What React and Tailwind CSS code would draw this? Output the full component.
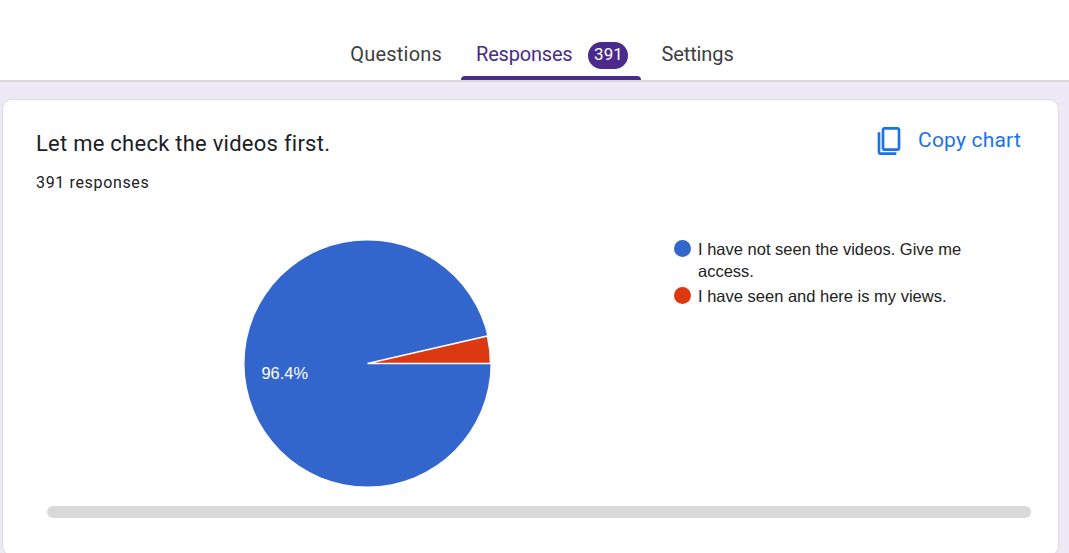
import React from 'react';

const tabFont = { fontFamily: 'Roboto, sans-serif' };

const CopyIcon = () => (
  <svg width="32" height="32" viewBox="0 0 24 24" fill="#1a73e8" className="-mt-[2px] block">
    <path d="M15.5 1.5H8.5C7.4 1.5 6.5 2.4 6.5 3.5V17.5C6.5 18.6 7.4 19.5 8.5 19.5H18.5C19.6 19.5 20.5 18.6 20.5 17.5V3.5C20.5 2.4 19.6 1.5 18.5 1.5H15.5ZM18.5 17.5H8.5V3.5H18.5V17.5Z" />
    <path d="M3.5 5.5V20.5C3.5 21.6 4.4 22.5 5.5 22.5H17.5V20.5H5.5V5.5H3.5Z" />
  </svg>
);

const PieChart = () => (
  <svg width="250" height="250" viewBox="0 0 250 250" className="block">
    <circle cx="123.5" cy="123.5" r="123" fill="#3366cc" />
    <path d="M123.5 123.5 L246.5 123.5 A123 123 0 0 0 243.4 95.9 Z" fill="#dc3912" stroke="#ffffff" strokeWidth="1.5" />
    <text x="17.5" y="138.5" fill="#ffffff" fontSize="16.4" fontFamily="Liberation Sans, Arial, sans-serif">96.4%</text>
  </svg>
);

const LegendItem = ({ color, children }) => (
  <div className="flex items-start gap-[7px]">
    <span className={`mt-[2px] h-[17px] w-[17px] shrink-0 rounded-full ${color}`} />
    <span>{children}</span>
  </div>
);

export default function App() {
  return (
    <div className="h-[553px] w-[1069px] overflow-hidden bg-[#ede9f7]">
      <header className="flex h-[82px] items-end justify-center border-b-2 border-[#d9d9d9] bg-white pl-[15px] text-[20px] font-[450] text-[#3c4043]" style={tabFont}>
        <div className="flex h-[80px] items-end">
          <div className="flex h-full items-center pl-[20px] pr-[19px] pt-[27px] tracking-[0.2px]">Questions</div>
          <div className="relative flex h-full items-center gap-[16px] pl-[15px] pr-[13px] pt-[27px] tracking-[-0.2px] text-[#4a2a8a]">
            Responses
            <span className="mt-[3px] flex h-[27px] w-[40px] items-center justify-center rounded-full bg-[#4a2a8a] text-[17px] tracking-normal text-white">391</span>
            <span className="absolute right-0 bottom-0 left-0 h-[4px] rounded-t-[4px] bg-[#4a2a8a]" />
          </div>
          <div className="flex h-full items-center px-[20px] pt-[27px] tracking-[-0.1px]">Settings</div>
        </div>
      </header>

      <main className="mx-[2px] mt-[17px] h-[457px] w-[1057px] rounded-[10px] border border-[#dadce0] bg-white pt-[28px] pl-[33px] pr-[37px]" style={tabFont}>
        <div className="flex items-start justify-between">
          <div>
            <h2 className="text-[22px] leading-[32px] tracking-[0.25px] text-[#202124]">Let me check the videos first.</h2>
            <p className="mt-[13px] text-[16px] leading-[20px] tracking-[0.65px] text-[#202124]">391 responses</p>
          </div>
          <div className="-mt-[1px] flex items-center gap-[13px] text-[#1a73e8]">
            <CopyIcon />
            <span className="-mt-[2px] text-[21px] font-[450] tracking-[0.2px]">Copy chart</span>
          </div>
        </div>

        <div className="mt-[47px] flex items-start pl-[208px]">
          <PieChart />
          <div className="-mt-[2px] ml-[180px] flex w-[300px] flex-col gap-[3px] text-[16.5px] leading-[22px] text-[#222222]" style={{ fontFamily: 'Liberation Sans, Arial, sans-serif' }}>
            <LegendItem color="bg-[#3366cc]">I have not seen the videos. Give me access.</LegendItem>
            <LegendItem color="bg-[#dc3912]">I have seen and here is my views.</LegendItem>
          </div>
        </div>

        <div className="mt-[16px] ml-[11px] h-[12px] w-[984px] rounded-full bg-[#d9d9d9]" />
      </main>
    </div>
  );
}
